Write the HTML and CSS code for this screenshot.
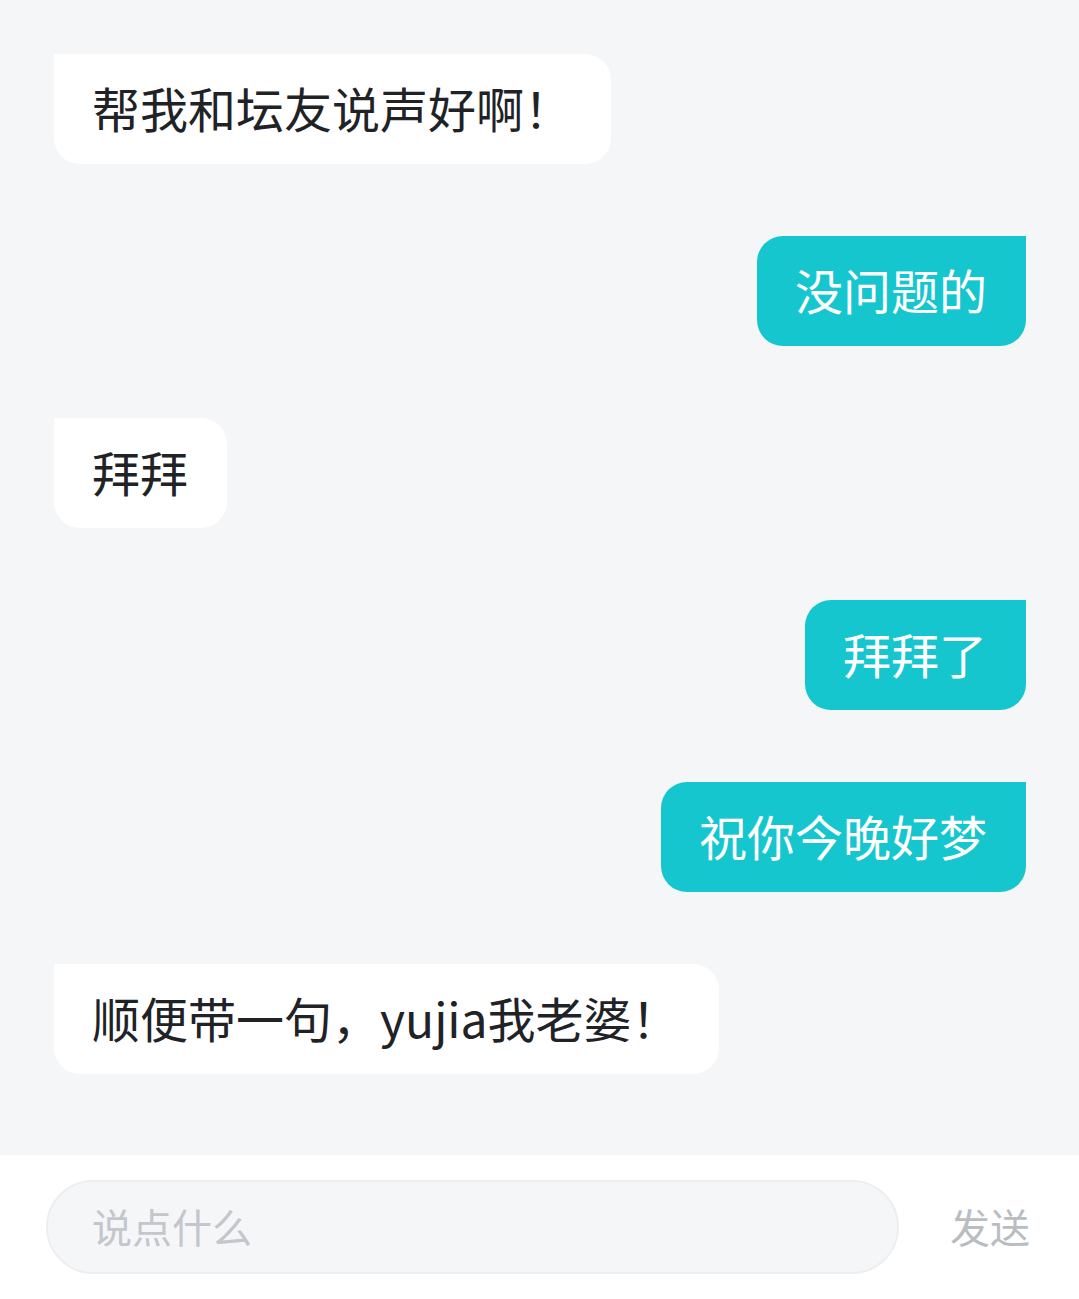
FILE: index.html
```html
<!DOCTYPE html>
<html>
<head>
    <meta charset="utf-8">
    <title>聊天</title>
    <link rel="stylesheet" href="styles.css">
</head>
<body>
    <div class="page">
        <div class="messages">
            <div class="msg left"><div class="bubble">帮我和坛友说声好啊！</div></div>
            <div class="msg right"><div class="bubble">没问题的</div></div>
            <div class="msg left"><div class="bubble">拜拜</div></div>
            <div class="msg right"><div class="bubble">拜拜了</div></div>
            <div class="msg right"><div class="bubble">祝你今晚好梦</div></div>
            <div class="msg left"><div class="bubble">顺便带一句，yujia我老婆！</div></div>
        </div>

        <div class="input-bar">
            <input class="input" type="text" placeholder="说点什么">
            <span class="send">发送</span>
        </div>
    </div>
</body>
</html>
```

FILE: styles.css
```css
body {
    margin: 0;
    background-color: #f5f6f8;
    font-family: "Noto Sans CJK SC", "Noto Sans", sans-serif;
}
.page {
    height: 1299px;
    display: flex;
    flex-direction: column;
}
.messages {
    flex: 1;
    display: flex;
    flex-direction: column;
    gap: 72px;
    padding: 54px 53px 0 54px;
}
.msg {
    display: flex;
}
.msg.right {
    justify-content: flex-end;
}
.bubble {
    height: 110px;
    box-sizing: border-box;
    display: flex;
    align-items: center;
    padding: 0 39px 4px 38px;
    font-size: 48px;
    border-radius: 26px;
    white-space: nowrap;
}
.left .bubble {
    background-color: #ffffff;
    color: #202226;
    border-top-left-radius: 0;
}
.right .bubble {
    background-color: #16c6cf;
    color: #ffffff;
    border-top-right-radius: 0;
}
.input-bar {
    height: 144px;
    background-color: #ffffff;
    display: flex;
    align-items: center;
    padding: 0 49px 0 46px;
    gap: 51px;
}
.input {
    flex: 1;
    height: 94px;
    box-sizing: border-box;
    border: 2px solid #eceef0;
    border-radius: 47px;
    background-color: #f5f6f8;
    padding: 0 44px 3px;
    font-family: inherit;
    font-size: 40px;
    outline: none;
}
.input::placeholder {
    color: #c3c6ca;
}
.send {
    font-size: 40px;
    color: #b9bdc1;
    padding-bottom: 3px;
}
```
